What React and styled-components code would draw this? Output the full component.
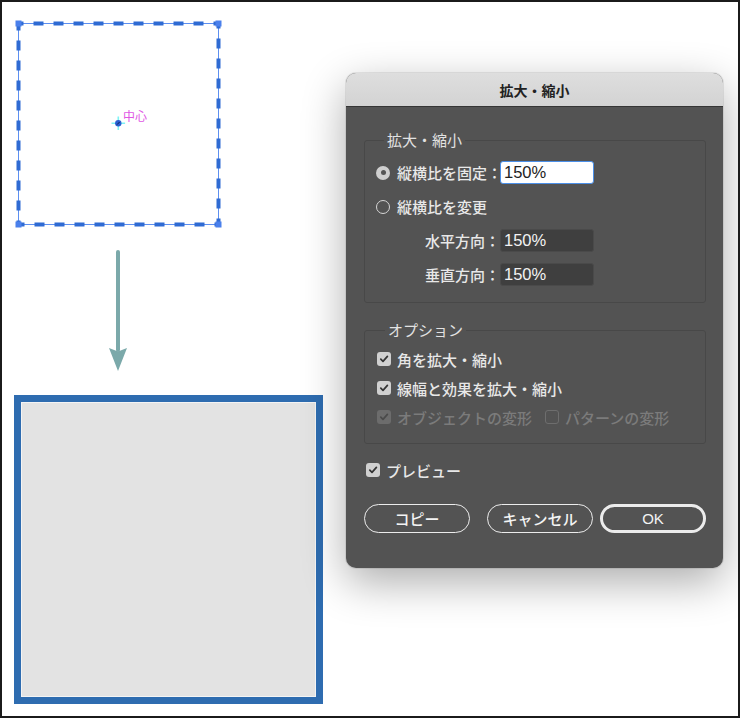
import React from "react";
import styled, { createGlobalStyle } from "styled-components";

const GlobalStyle = createGlobalStyle`
  body {
    margin: 0;
    background: #ffffff;
    font-family: "Noto Sans CJK JP", "Liberation Sans", sans-serif;
  }
`;

const Frame = styled.div`
  width: 740px;
  height: 718px;
  box-sizing: border-box;
  border: 2px solid #1b1b1b;
  background: #ffffff;
  display: flex;
  overflow: hidden;
`;

// left side: artwork before / after scaling
const ArtColumn = styled.div`
  width: 344px;
  flex: none;
  box-sizing: border-box;
  padding: 17px 0 0 12px;
  display: flex;
  flex-direction: column;
  align-items: flex-start;
`;

const ArrowWrap = styled.div`
  margin: 19px 0 0 92px;
  height: 122px;
`;

const ScaledSquare = styled.div`
  margin-top: 23px;
  width: 309px;
  height: 309px;
  box-sizing: border-box;
  border: 7px solid #2e6cb0;
  background: #e3e3e3;
  box-shadow: inset 0 0 0 1px #f4f4f4;
`;

const DialogColumn = styled.div`
  flex: 1;
  padding-top: 71px;
`;

const Dialog = styled.div`
  width: 377px;
  border-radius: 10px;
  overflow: hidden;
  background: #535353;
  box-shadow: 0 14px 44px rgba(0, 0, 0, 0.33), 0 0 0 1px rgba(0, 0, 0, 0.08);
`;

const TitleBar = styled.div`
  height: 34px;
  box-sizing: border-box;
  background: linear-gradient(#dedede, #d3d3d3);
  border-bottom: 1px solid #353535;
  display: flex;
  align-items: center;
  justify-content: center;
  font-size: 14px;
  font-weight: 700;
  color: #222222;
`;

const Body = styled.div`
  padding: 24px 17px 35px 18px;
  color: #e8e8e8;
  font-size: 15px;
  font-weight: 500;
`;

const Group = styled.fieldset`
  margin: ${(p) => p.$top || 0}px 0 0 0;
  padding: ${(p) => p.$pad};
  border: 1px solid #484848;
  border-radius: 3px;
  display: flex;
  flex-direction: column;
  gap: ${(p) => p.$gap}px;
  min-width: 0;
`;

const Legend = styled.legend`
  margin-left: 8px;
  padding: 0 3px;
  font-size: 15px;
  font-weight: 400;
  line-height: 18px;
  color: #e2e2e2;
`;

const Row = styled.div`
  display: flex;
  align-items: center;
  height: ${(p) => p.$h || 23}px;
  gap: ${(p) => p.$gap || 0}px;
`;

const LabelCell = styled.div`
  width: 124px;
  flex: none;
  display: flex;
  align-items: center;
  justify-content: ${(p) => (p.$right ? "flex-end" : "flex-start")};
  gap: 7px;
  white-space: nowrap;
`;

const Field = styled.div`
  width: 94px;
  height: 23px;
  box-sizing: border-box;
  border-radius: 3px;
  padding-left: 3px;
  display: flex;
  align-items: center;
  font-family: "Liberation Sans", sans-serif;
  font-size: 16.5px;
  font-weight: 400;
  background: ${(p) => (p.$focus ? "#ffffff" : "#3f3f3f")};
  color: ${(p) => (p.$focus ? "#222222" : "#f2f2f2")};
  border: ${(p) => (p.$focus ? "1.5px solid #4b8fe8" : "1px solid #4a4a4a")};
`;

const Radio = styled.span`
  width: 14px;
  height: 14px;
  flex: none;
  box-sizing: border-box;
  border-radius: 50%;
  display: flex;
  align-items: center;
  justify-content: center;
  background: ${(p) => (p.$checked ? "#cfcfcf" : "transparent")};
  border: ${(p) => (p.$checked ? "none" : "1.5px solid #d6d6d6")};
  &::after {
    content: "";
    display: ${(p) => (p.$checked ? "block" : "none")};
    width: 5px;
    height: 5px;
    border-radius: 50%;
    background: #555555;
  }
`;

const Box = styled.span`
  width: 14px;
  height: 14px;
  flex: none;
  box-sizing: border-box;
  border-radius: 3px;
  display: flex;
  align-items: center;
  justify-content: center;
  background: ${(p) =>
    p.$checked ? (p.$disabled ? "#6c6c6c" : "#d0d0d0") : "transparent"};
  border: ${(p) => (p.$checked ? "none" : "1px solid #6e6e6e")};
`;

const Check = styled.label`
  display: flex;
  align-items: center;
  gap: 6px;
  white-space: nowrap;
  color: ${(p) => (p.$disabled ? "#7b7b7b" : "#e8e8e8")};
`;

const PreviewRow = styled.div`
  margin-top: 16px;
  padding-left: 2px;
  height: 20px;
  display: flex;
  align-items: center;
`;

const Buttons = styled.div`
  margin-top: 24px;
  display: flex;
  justify-content: space-between;
`;

const ButtonPair = styled.div`
  display: flex;
  gap: 7px;
`;

const Button = styled.button`
  width: 106px;
  height: 29px;
  box-sizing: border-box;
  border-radius: 15px;
  background: transparent;
  border: ${(p) => (p.$primary ? "3px" : "1.5px")} solid #ececec;
  color: #f4f4f4;
  font-family: ${(p) =>
    p.$latin
      ? '"Liberation Sans", sans-serif'
      : '"Noto Sans CJK JP", sans-serif'};
  font-size: 15px;
  font-weight: 500;
  padding: 0;
`;

const CheckBox = ({ checked, disabled }) => (
  <Box $checked={checked} $disabled={disabled}>
    {checked && (
      <svg width="10" height="10" viewBox="0 0 10 10">
        <polyline
          points="1.8,5.2 4,7.4 8.4,2.4"
          fill="none"
          stroke={disabled ? "#4a4a4a" : "#333333"}
          strokeWidth="1.7"
          strokeLinecap="round"
          strokeLinejoin="round"
        />
      </svg>
    )}
  </Box>
);

const SelectedArt = () => (
  <svg width="212" height="212" viewBox="0 0 212 212">
    <rect x="4.5" y="4.5" width="200" height="201" fill="none" stroke="#5d8ff0" strokeWidth="1" />
    <rect
      x="4.5"
      y="4.5"
      width="200"
      height="201"
      fill="none"
      stroke="#2f6bd3"
      strokeWidth="4"
      strokeDasharray="10 10"
      strokeDashoffset="5"
    />
    {[
      [4.5, 4.5],
      [204.5, 4.5],
      [4.5, 205.5],
      [204.5, 205.5],
    ].map(([x, y]) => (
      <rect key={`${x}-${y}`} x={x - 3} y={y - 3} width="6" height="6" fill="#4a80ec" />
    ))}
    <path d="M97.5 104.3h13.6M104.3 97.5v13.6" stroke="#7ff3f5" strokeWidth="1.6" />
    <circle cx="104.3" cy="104.3" r="3.2" fill="#2a5fd0" />
    <path d="M103 105.6l2.6-2.6" stroke="#0d1f55" strokeWidth="1" />
    <text x="109" y="102" fontSize="12" fill="#e056e4" fontFamily="Noto Sans CJK JP, sans-serif">
      中心
    </text>
  </svg>
);

const DownArrow = () => (
  <svg width="24" height="122" viewBox="0 0 24 122">
    <line x1="12" y1="2" x2="12" y2="100" stroke="#7ba9aa" strokeWidth="4" strokeLinecap="round" />
    <path d="M3 98 L12 101.5 L21 98 L12 121 Z" fill="#7ba9aa" />
  </svg>
);

const App = () => (
  <>
    <GlobalStyle />
    <Frame>
      <ArtColumn>
        <SelectedArt />
        <ArrowWrap>
          <DownArrow />
        </ArrowWrap>
        <ScaledSquare />
      </ArtColumn>

      <DialogColumn>
        <Dialog>
          <TitleBar>拡大・縮小</TitleBar>
          <Body>
            <Group $pad="12px 11px 16px 11px" $gap={11}>
              <Legend>拡大・縮小</Legend>
              <Row>
                <LabelCell>
                  <Radio $checked />
                  縦横比を固定：
                </LabelCell>
                <Field $focus>150%</Field>
              </Row>
              <Row>
                <LabelCell>
                  <Radio />
                  縦横比を変更
                </LabelCell>
              </Row>
              <Row>
                <LabelCell $right>水平方向：</LabelCell>
                <Field>150%</Field>
              </Row>
              <Row>
                <LabelCell $right>垂直方向：</LabelCell>
                <Field>150%</Field>
              </Row>
            </Group>

            <Group $top={18} $pad="10px 12px 16px 12px" $gap={9}>
              <Legend>オプション</Legend>
              <Row $h={20}>
                <Check>
                  <CheckBox checked />
                  角を拡大・縮小
                </Check>
              </Row>
              <Row $h={20}>
                <Check>
                  <CheckBox checked />
                  線幅と効果を拡大・縮小
                </Check>
              </Row>
              <Row $h={20} $gap={13}>
                <Check $disabled>
                  <CheckBox checked disabled />
                  オブジェクトの変形
                </Check>
                <Check $disabled>
                  <CheckBox disabled />
                  パターンの変形
                </Check>
              </Row>
            </Group>

            <PreviewRow>
              <Check>
                <CheckBox checked />
                プレビュー
              </Check>
            </PreviewRow>

            <Buttons>
              <Button>コピー</Button>
              <ButtonPair>
                <Button>キャンセル</Button>
                <Button $primary $latin>
                  OK
                </Button>
              </ButtonPair>
            </Buttons>
          </Body>
        </Dialog>
      </DialogColumn>
    </Frame>
  </>
);

export default App;
